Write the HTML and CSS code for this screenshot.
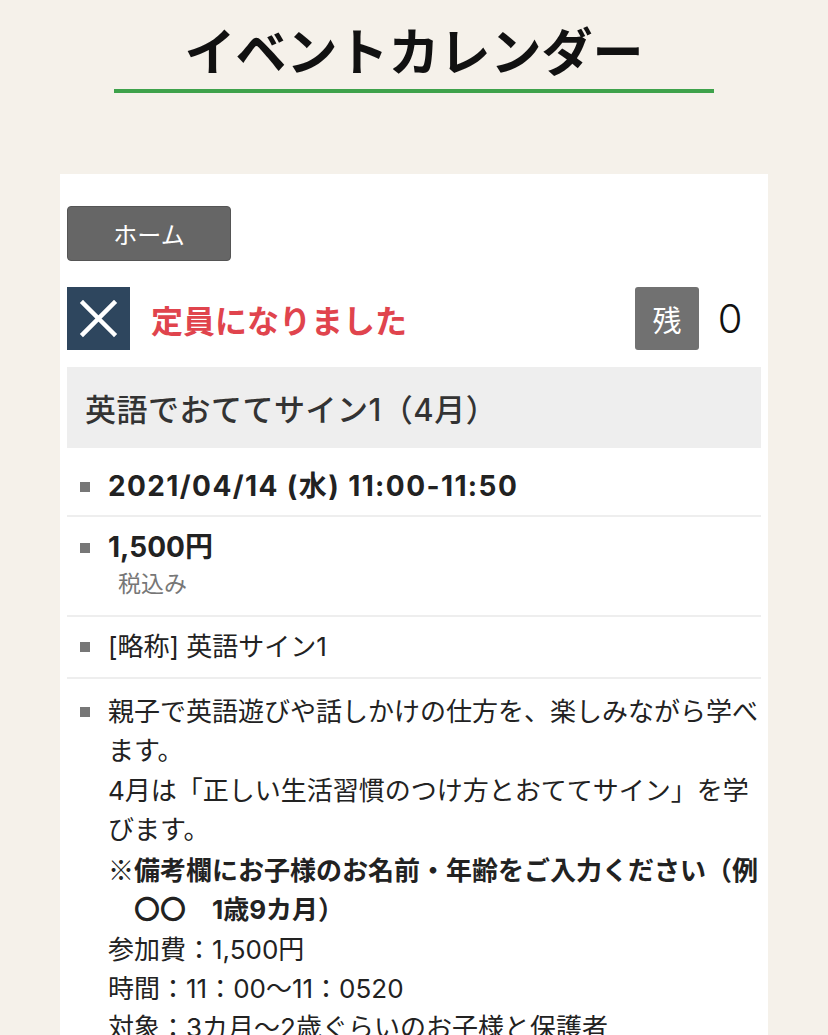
FILE: index.html
```html
<!DOCTYPE html>
<html lang="ja">
<head>
  <meta charset="UTF-8" />
  <meta name="viewport" content="width=device-width, initial-scale=1.0" />
  <title>イベントカレンダー</title>
  <link rel="stylesheet" href="styles.css">
</head>
<body>
  <header class="page-header">
    <h1>イベントカレンダー</h1>
  </header>

  <div class="card">
    <a href="#" class="home-btn">ホーム</a>

    <div class="status-row">
      <div class="status-left">
        <span class="full-icon">
          <svg viewBox="0 0 63 63" width="63" height="63">
            <path d="M16 16 L47 47 M47 16 L16 47" stroke="#fff" stroke-width="4.5" stroke-linecap="square" fill="none" />
          </svg>
        </span>
        <span class="full-text">定員になりました</span>
      </div>
      <div class="status-right">
        <span class="remain-label">残</span>
        <span class="remain-count">0</span>
      </div>
    </div>

    <h2 class="event-title">英語でおててサイン1（4月）</h2>

    <ul class="info-list">
      <li class="info-item item-date">
        <span class="bullet"></span>
        <div class="info-body"><strong>2021/04/14 (水) 11:00-11:50</strong></div>
      </li>
      <li class="info-item item-price">
        <span class="bullet"></span>
        <div class="info-body">
          <strong>1,500円</strong>
          <div class="tax-note">税込み</div>
        </div>
      </li>
      <li class="info-item item-abbr">
        <span class="bullet"></span>
        <div class="info-body">[略称] 英語サイン1</div>
      </li>
      <li class="info-item item-desc">
        <span class="bullet"></span>
        <div class="info-body">
          <p>親子で英語遊びや話しかけの仕方を、楽しみながら学べます。</p>
          <p>4月は「正しい生活習慣のつけ方とおててサイン」を学びます。</p>
          <p><span class="note-mark">※</span><strong>備考欄にお子様のお名前・年齢をご入力ください（例<br>　〇〇　1歳9カ月）</strong></p>
          <p>参加費：1,500円</p>
          <p>時間：11：00〜11：0520</p>
          <p>対象：3カ月〜2歳ぐらいのお子様と保護者</p>
        </div>
      </li>
    </ul>
  </div>
</body>
</html>
```

FILE: styles.css
```css
body {
  margin: 0;
  background: #f5f1ea;
  color: #222;
  font-family: "Inter", "Noto Sans CJK JP", sans-serif;
}

.page-header {
  width: 600px;
  margin: 0 auto;
  border-bottom: 4px solid #3ea24b;
  padding-top: 10px;
}
.page-header h1 {
  margin: 0;
  text-align: center;
  font-family: "Noto Sans CJK JP", sans-serif;
  font-size: 51px;
  font-weight: 700;
  line-height: 79px;
  color: #111;
}

.card {
  background: #fff;
  margin: 81px 60px 0;
  padding: 32px 7px 40px;
}

.home-btn {
  display: flex;
  align-items: center;
  justify-content: center;
  width: 164px;
  height: 55px;
  box-sizing: border-box;
  background: #666;
  border: 1px solid #555;
  border-radius: 4px;
  color: #fff;
  font-family: "Noto Sans CJK JP", sans-serif;
  font-size: 24px;
  text-decoration: none;
}

.status-row {
  display: flex;
  justify-content: space-between;
  align-items: center;
  margin-top: 26px;
}
.status-left, .status-right {
  display: flex;
  align-items: center;
}
.full-icon {
  display: block;
  width: 63px;
  height: 63px;
  background: #2e465e;
}
.full-icon svg {
  display: block;
}
.full-text {
  margin-left: 21px;
  color: #e0444d;
  font-size: 32px;
  font-weight: 700;
}
.remain-label {
  display: flex;
  align-items: center;
  justify-content: center;
  width: 64px;
  height: 63px;
  background: #717171;
  border-radius: 3px;
  color: #fff;
  font-family: "Noto Sans CJK JP", sans-serif;
  font-size: 29px;
}
.remain-count {
  width: 62px;
  text-align: center;
  font-size: 40px;
  font-weight: 300;
  color: #111;
}

.event-title {
  margin: 17px 0 0;
  background: #eee;
  height: 81px;
  display: flex;
  align-items: center;
  padding-left: 18px;
  font-size: 31px;
  font-weight: 500;
  letter-spacing: 0.5px;
  color: #333;
}

.info-list {
  list-style: none;
  margin: 0;
  padding: 0;
}
.info-item {
  display: flex;
  align-items: flex-start;
  border-bottom: 2px solid #eee;
  padding: 0 0 0 13px;
  font-size: 26px;
  line-height: 39px;
}
.bullet {
  flex: none;
  width: 10px;
  height: 10px;
  margin-top: 15px;
  margin-right: 18px;
  background: #777;
}
.info-body {
  flex: 1;
}
.info-body strong {
  font-weight: 700;
}
.info-body p {
  margin: 0;
}
.note-mark {
  font-family: "Noto Sans CJK JP", sans-serif;
}

.item-date {
  padding-top: 19px;
  padding-bottom: 9px;
}
.item-date strong,
.item-price strong {
  font-size: 28px;
}
.item-date strong {
  letter-spacing: 1.4px;
}
.item-price {
  padding-top: 11px;
  padding-bottom: 14px;
}
.tax-note {
  margin-left: 10px;
  font-size: 23px;
  line-height: 34px;
  color: #777;
}
.item-abbr {
  padding-top: 10px;
  padding-bottom: 11px;
}
.item-desc {
  padding-top: 13px;
  border-bottom: none;
  line-height: 39.3px;
}
```
